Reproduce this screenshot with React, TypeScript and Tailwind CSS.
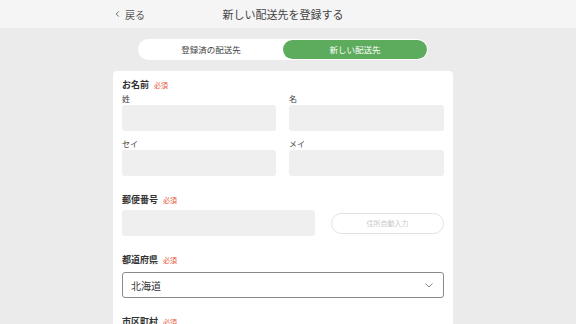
import * as React from 'react';

const FONT = "font-['Noto_Sans_CJK_JP','Noto_Sans',sans-serif]";

function Required() {
  return <span className="ml-[5px] text-[7px] text-[#e8553a]">必須</span>;
}

function SectionTitle({ children, className = '' }: { children: React.ReactNode; className?: string }) {
  return (
    <div className={`flex items-center h-[12px] leading-[12px] ${className}`}>
      <span className="text-[9px] font-bold text-[#333]">{children}</span>
      <Required />
    </div>
  );
}

function Field({ label }: { label: string }) {
  return (
    <div className="flex flex-col">
      <div className="h-[12px] leading-[12px] text-[8px] text-[#444]">{label}</div>
      <div className="h-[26px] rounded-[3px] bg-[#efefef]" />
    </div>
  );
}

export default function App() {
  return (
    <div className={`w-[576px] h-[324px] overflow-hidden bg-[#ebebeb] ${FONT}`}>
      <header className="h-[28px] bg-[#f5f5f5] flex justify-center pr-[10px]">
        <div className="w-[340px] relative flex items-center justify-center">
          <button className="absolute left-[1px] flex items-center gap-[4px] text-[10px] text-[#555]">
            <svg width="7" height="8" viewBox="0 0 8 8" fill="none" stroke="#666" strokeWidth="1.1">
              <path d="M5.5 1 L2.5 4 L5.5 7" />
            </svg>
            戻る
          </button>
          <h1 className="text-[11px] text-[#444]">新しい配送先を登録する</h1>
        </div>
      </header>

      <div className="flex flex-col items-center pr-[10px]">
        <div className="mt-[11px] w-[290px] h-[21px] rounded-full bg-white flex p-[1px]">
          <div className="flex-1 flex items-center justify-center text-[8.5px] text-[#444]">登録済の配送先</div>
          <div className="flex-1 flex items-center justify-center rounded-full bg-[#5dab5c] text-[8.5px] text-white">新しい配送先</div>
        </div>

        <div className="mt-[11px] w-[340px] h-[260px] bg-white rounded-t-[4px] px-[9px] pt-[8px]">
          <SectionTitle>お名前</SectionTitle>
          <div className="grid grid-cols-[154px_155px] gap-x-[13px] gap-y-[7px] mt-[2px]">
            <Field label="姓" />
            <Field label="名" />
            <Field label="セイ" />
            <Field label="メイ" />
          </div>

          <SectionTitle className="mt-[18px]">郵便番号</SectionTitle>
          <div className="mt-[4px] flex items-center gap-[16px]">
            <div className="w-[193px] h-[26px] rounded-[3px] bg-[#efefef]" />
            <button className="flex-1 h-[21px] rounded-full border border-[#e2e2e2] text-[7px] text-[#c8c8c8]">住所自動入力</button>
          </div>

          <SectionTitle className="mt-[18px]">都道府県</SectionTitle>
          <div className="mt-[6px] h-[26px] rounded-[3px] border border-[#8a8a8a] flex items-center justify-between pl-[8px] pr-[10px]">
            <span className="text-[10px] text-[#333]">北海道</span>
            <svg width="8" height="5" viewBox="0 0 8 5" fill="none" stroke="#777" strokeWidth="0.9">
              <path d="M0.5 0.5 L4 4 L7.5 0.5" />
            </svg>
          </div>

          <SectionTitle className="mt-[18px]">市区町村</SectionTitle>
        </div>
      </div>
    </div>
  );
}
